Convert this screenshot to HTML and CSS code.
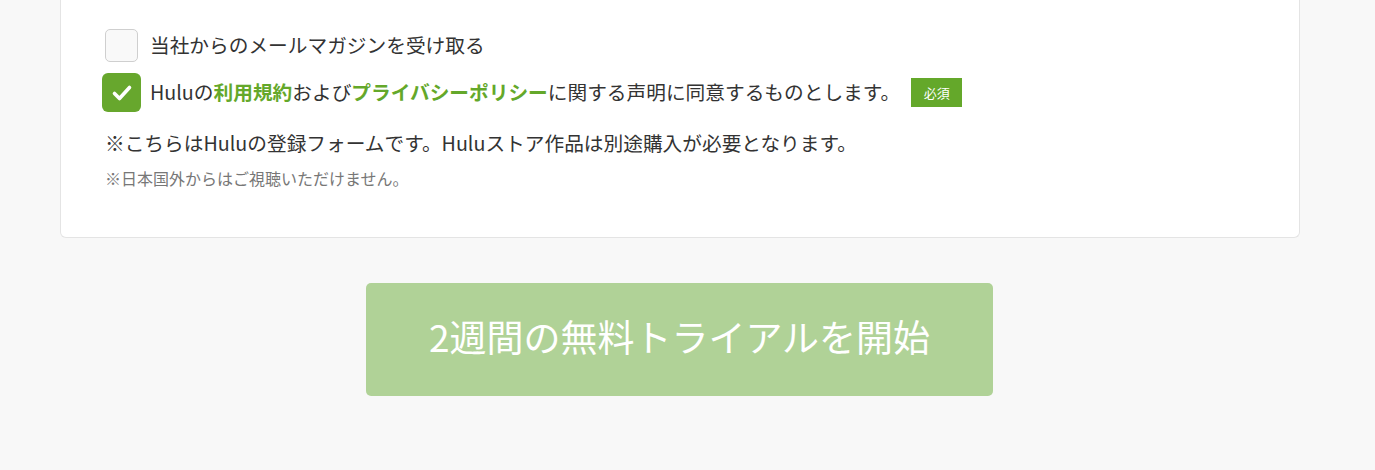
FILE: index.html
```html
<!DOCTYPE html>
<html lang="ja">
<head>
    <meta charset="utf-8">
    <title>Hulu 登録</title>
    <link rel="stylesheet" href="styles.css">
</head>
<body>
    <div class="page">
        <div class="card">
            <label class="check-row">
                <span class="checkbox"></span>
                <span class="check-text">当社からのメールマガジンを受け取る</span>
            </label>
            <label class="check-row">
                <span class="checkbox checked">
                    <svg width="22" height="22" viewBox="0 0 22 22">
                        <path d="M3.5 11.5 L8.5 16.5 L18.5 5.5" fill="none" stroke="#fff" stroke-width="3.6" stroke-linecap="round" stroke-linejoin="round"/>
                    </svg>
                </span>
                <span class="check-text">Huluの<a class="green">利用規約</a>および<a class="green">プライバシーポリシー</a>に関する声明に同意するものとします。</span>
                <span class="required">必須</span>
            </label>
            <p class="note">※こちらはHuluの登録フォームです。Huluストア作品は別途購入が必要となります。</p>
            <p class="sub-note">※日本国外からはご視聴いただけません。</p>
        </div>
        <button class="start-btn" type="button">2週間の無料トライアルを開始</button>
    </div>
</body>
</html>
```

FILE: styles.css
```css
body{
    margin:0;
    background:#f8f8f8;
    font-family:"Noto Sans CJK JP", "Noto Sans", sans-serif;
    color:#333;
}
.page{
    width:1240px;
    margin-left:60px;
}
.card{
    background:#fff;
    border:1px solid #e4e4e4;
    border-top:none;
    border-radius:0 0 6px 6px;
    padding:29px 44px 47px;
}
.check-row{
    display:flex;
    align-items:center;
    gap:12px;
    height:33px;
    margin-bottom:14px;
}
.checkbox{
    box-sizing:border-box;
    width:33px;
    height:33px;
    flex:none;
    border:1px solid #cfcfcf;
    border-radius:5px;
    background:#f9f9f9;
}
.checkbox.checked{
    width:39px;
    height:39px;
    margin:-3px;
    border:none;
    border-radius:6px;
    background:#67a72d;
    display:flex;
    align-items:center;
    justify-content:center;
}
.check-text{
    font-size:19.7px;
    white-space:nowrap;
    padding-bottom:2px;
}
.green{
    color:#64a82a;
    font-weight:bold;
}
.required{
    margin-left:-1px;
    background:#64a82a;
    color:#fff;
    font-size:13px;
    width:51px;
    height:29px;
    line-height:29px;
    text-align:center;
}
.note{
    margin:19px 0 0;
    font-size:19.7px;
    line-height:30px;
}
.sub-note{
    margin:8px 0 0;
    font-size:16px;
    line-height:24px;
    color:#777;
}
.start-btn{
    display:block;
    width:627px;
    height:113px;
    margin:45px 0 0 306px;
    padding:0 0 7px;
    border:none;
    border-radius:5px;
    background:#b0d297;
    color:#fff;
    font-family:inherit;
    font-size:37px;
}
```
